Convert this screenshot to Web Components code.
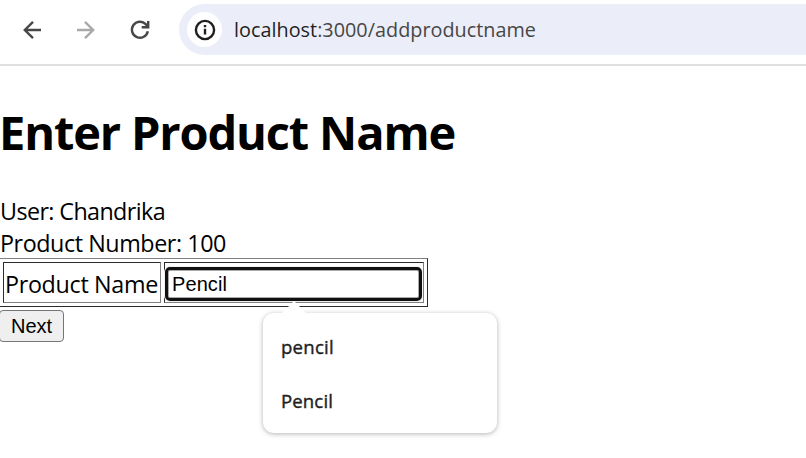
<!DOCTYPE html>
<html lang="en"><head><meta charset="utf-8"><title>Enter Product Name</title>
<style>
html,body{margin:0;height:100%;overflow:hidden;background:#fff}
body{font-family:"Open Sans","Noto Sans",sans-serif;color:#000}
</style></head><body>
<product-app></product-app>
<script>
const define=(name,html,setup)=>customElements.define(name,class extends HTMLElement{
  constructor(){super();this.attachShadow({mode:'open'}).innerHTML=html}
  connectedCallback(){if(setup)setup(this)}
});
// A single line whose letter spacing is adjusted to occupy the requested width.
define('text-line',`<style>:host{display:block;white-space:pre}span{display:inline-block}</style><span><slot></slot></span>`,el=>{
  const s=el.shadowRoot.querySelector('span'),w=+el.getAttribute('width');
  const n=el.textContent.length;
  s.style.letterSpacing=((w-s.getBoundingClientRect().width)/n)+'px';
});
define('nav-icon',`<style>:host{display:block;width:24px;height:24px}svg{display:block;fill:none;stroke:currentColor;stroke-width:2.4}</style><svg width="24" height="24"></svg>`,el=>{
  el.shadowRoot.querySelector('svg').innerHTML={
    back:'<path d="M21 12H5M13 3.8 4.8 12l8.2 8.2"/>',
    forward:'<path d="M3 12h16M11 3.8 19.2 12l-8.2 8.2"/>',
    reload:'<path d="M19.8 13.2A8 8 0 1 1 17.7 6.2L20 8.7"/><path d="M20.2 3v6.2h-6.5"/>',
    info:'<circle cx="12" cy="12" r="9.1"/><path d="M12 10.8v5.8M12 7.1v2.2"/>'
  }[el.getAttribute('name')];
});
define('address-bar',`<style>
:host{display:flex;align-items:center;box-sizing:border-box;height:51px;flex:1;background:#ebeef8;border-radius:26px 0 0 26px;padding-left:8px}
.info{width:35px;height:35px;border-radius:50%;background:#fff;display:grid;place-items:center;color:#1f1f1f;margin-right:12px}
text-line{font-size:19.8px;line-height:30px;color:#474747}b{font-weight:400;color:#1f1f1f}
</style><div class="info"><nav-icon name="info"></nav-icon></div><text-line width="302"><b>localhost</b>:3000/addproductname</text-line>`);
define('browser-toolbar',`<style>
:host{display:flex;box-sizing:border-box;height:66px;padding:4px 0 0 20px;border-bottom:2px solid #dfdfdf;color:#474747}
nav{display:flex;gap:30px;height:51px;align-items:center;width:159px}nav nav-icon:nth-child(2){color:#a9a9a9}
</style><nav><nav-icon name="back"></nav-icon><nav-icon name="forward"></nav-icon><nav-icon name="reload"></nav-icon></nav><address-bar></address-bar>`);
define('suggestion-list',`<style>
:host{display:block;box-sizing:border-box;width:234px;height:120px;padding:7px 0 0 18px;background:#fff;border-radius:11px;box-shadow:0 1px 5px rgba(0,0,0,.3);font-size:18.6px;font-weight:400;-webkit-text-stroke:.4px #1f1f1f;line-height:54px;color:#1f1f1f}
:host::before{content:"";position:absolute;left:18px;top:-12px;border:solid transparent;border-width:0 13px 13px;border-bottom-color:#fff}
</style><text-line width="53">pencil</text-line><text-line width="52">Pencil</text-line>`);
define('product-table',`<style>
:host{display:flex;gap:3px;box-sizing:border-box;width:428px;height:49px;padding:3px;border:solid #2c2c2c;border-width:1px 1px 1px 0;border-top-color:#808080}
.cell{box-sizing:border-box;height:41px;border:1px solid #808080;border-top-color:#2c2c2c;border-left-color:#2c2c2c}
.name{width:158px;padding:3px 0 0 1px;font-size:23.3px;line-height:36px}
.value{width:260px;padding:4px 0 0}
.input{box-sizing:border-box;width:257px;height:34px;border:3px solid #101010;border-radius:5px;box-shadow:0 0 0 1px #f2f2f2,inset 0 0 0 1px #aaa;padding-left:4px;background:#fff;font:20px/28px "Liberation Sans",sans-serif}
</style><div class="cell name"><text-line width="153">Product Name</text-line></div><div class="cell value"><div class="input"><text-line width="55">Pencil</text-line></div></div>`);
define('product-app',`<style>
:host{display:block;height:458px;overflow:hidden;position:relative}
h1{margin:34px 0 0;font-size:47px;line-height:64px;font-weight:700}
h1 text-line{margin-left:-1px}
.details{margin:31px 0 0;font-size:23.3px;line-height:32px;height:63px}
button{display:block;box-sizing:border-box;width:65px;height:32px;margin:3px 0 0 -1px;padding:0 0 0 11px;border:1px solid #767676;border-radius:4px;background:#efefef;color:#000;text-align:left;font:20px/29px "Liberation Sans",sans-serif}
suggestion-list{position:absolute;left:263px;top:313px}
</style><browser-toolbar></browser-toolbar><main><h1><text-line width="456">Enter Product Name</text-line></h1>
<div class="details"><text-line width="165">User: Chandrika</text-line><text-line width="226">Product Number: 100</text-line></div>
<product-table></product-table><button><text-line width="41">Next</text-line></button></main><suggestion-list></suggestion-list>`);
</script></body></html>
